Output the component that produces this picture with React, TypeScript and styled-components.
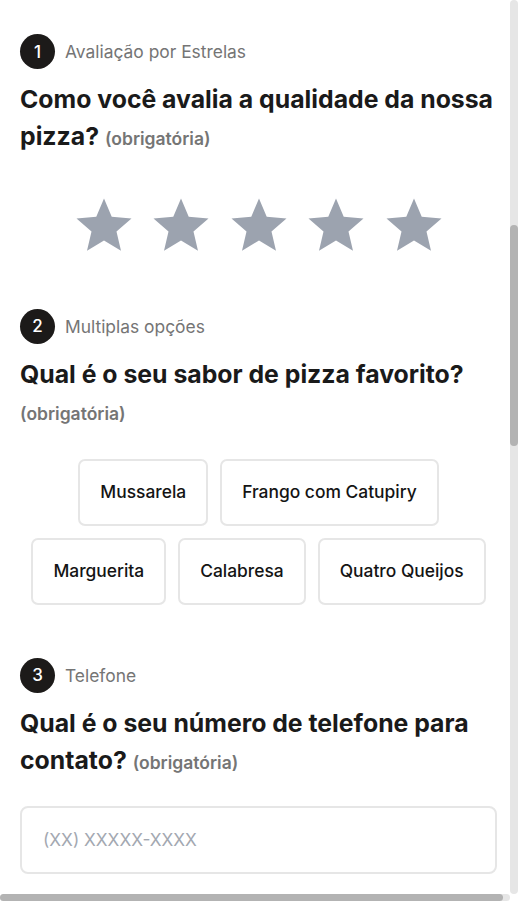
import React, { useLayoutEffect, useState } from "react";
import styled, { createGlobalStyle } from "styled-components";

const Global = createGlobalStyle`
  html, body { margin: 0; padding: 0; background: #fff; }
  body { font-family: Inter, "Noto Sans", Arial, sans-serif; overflow-x: hidden; }
  * { box-sizing: border-box; }
`;

const CONTENT_WIDTH = 517;
const BAR_V = 8;
const BAR_H = 7;

const Inner = styled.div`
  width: ${CONTENT_WIDTH}px;
  min-height: 3625px;
  padding: 0 20px;
`;

const Cover = styled.header`
  height: 913px;
  display: flex;
  flex-direction: column;
  align-items: center;
  justify-content: center;
  gap: 16px;
  text-align: center;
`;

const CoverTitle = styled.h1`
  margin: 0;
  font-size: 28px;
  font-weight: 700;
  color: #1a1a1a;
`;

const CoverText = styled.p`
  margin: 0;
  font-size: 17.4px;
  color: #737373;
`;

const Form = styled.form`
  display: flex;
  flex-direction: column;
  gap: 50px;
  padding-top: 34px;
  padding-bottom: 80px;
`;

const Section = styled.section`
  display: flex;
  flex-direction: column;
`;

const HeaderRow = styled.div`
  display: flex;
  align-items: center;
  gap: 10px;
`;

const Badge = styled.span`
  width: 35px;
  height: 35px;
  border-radius: 50%;
  background: #1c1a19;
  color: #fff;
  display: flex;
  align-items: center;
  justify-content: center;
  font-size: 17px;
  font-weight: 500;
`;

const Kind = styled.span`
  font-size: 17.4px;
  color: #757575;
`;

const Question = styled.h2`
  margin: 12px 0 0;
  font-size: 24.8px;
  font-weight: 700;
  line-height: 37px;
  color: #1a1a1a;
`;

const Required = styled.span`
  font-size: 17.5px;
  font-weight: 600;
  color: #757575;
`;

const StarRow = styled.div`
  margin-top: 35.5px;
  display: flex;
  justify-content: center;
  gap: 11.5px;
`;

const StarButton = styled.button`
  padding: 0;
  border: 0;
  background: none;
  width: 66px;
  height: 66px;
  display: block;
  cursor: pointer;
  svg { display: block; }
`;

const Options = styled.div`
  margin: 27px 0 3px;
  display: flex;
  flex-wrap: wrap;
  justify-content: center;
  column-gap: 12px;
  row-gap: 12px;
`;

const Option = styled.button`
  padding: 19.5px 20px;
  border: 2px solid #e6e6e6;
  border-radius: 7px;
  background: #fff;
  font-family: Inter, "Noto Sans", Arial, sans-serif;
  font-size: 17.4px;
  line-height: 24px;
  font-weight: 500;
  color: #141414;
  cursor: pointer;
`;

const TextInput = styled.input`
  margin-top: 25px;
  width: 100%;
  height: 68px;
  border: 2px solid #e6e6e6;
  border-radius: 8px;
  padding: 0 21px;
  font-family: Inter, "Noto Sans", Arial, sans-serif;
  font-size: 17.3px;
  color: #1a1a1a;
  outline: none;
  &::placeholder { color: #a3a8b1; }
`;

const TextArea = styled.textarea`
  margin-top: 25px;
  width: 100%;
  height: 140px;
  border: 2px solid #e6e6e6;
  border-radius: 8px;
  padding: 20px 21px;
  font-family: Inter, "Noto Sans", Arial, sans-serif;
  font-size: 17.3px;
  resize: none;
  outline: none;
  &::placeholder { color: #a3a8b1; }
`;

const Submit = styled.button`
  align-self: flex-start;
  padding: 16px 32px;
  border: 0;
  border-radius: 8px;
  background: #1c1a19;
  color: #fff;
  font-family: Inter, "Noto Sans", Arial, sans-serif;
  font-size: 17px;
  font-weight: 600;
`;

/* scroll indicators drawn over the page edge */
const VTrack = styled.div`
  position: fixed;
  top: 0;
  right: 0;
  width: ${BAR_V}px;
  height: calc(100vh - ${BAR_H}px);
  background: #e6e6e6;
  border-radius: 4px;
  z-index: 20;
`;

const HTrack = styled.div`
  position: fixed;
  left: 0;
  bottom: 0;
  width: calc(100vw - ${BAR_V}px);
  height: ${BAR_H}px;
  background: #e6e6e6;
  border-radius: 4px;
  z-index: 20;
`;

const Thumb = styled.div`
  position: absolute;
  background: #b3b3b3;
  border-radius: 4px;
`;

const Star = () => (
  <svg width="66" height="66" viewBox="0 0 24 24">
    <path
      fill="#9ca3af"
      d="M12 17.27L18.18 21l-1.64-7.03L22 9.24l-7.19-.61L12 2 9.19 8.63 2 9.24l5.46 4.73L5.82 21z"
    />
  </svg>
);

const flavors = [
  "Mussarela",
  "Frango com Catupiry",
  "Marguerita",
  "Calabresa",
  "Quatro Queijos",
];

type Bars = { top: number; height: number; width: number };

export default function App() {
  const [bars, setBars] = useState<Bars>({ top: 225, height: 220, width: 503 });

  useLayoutEffect(() => {
    const update = () => {
      const doc = document.documentElement;
      const vTrack = window.innerHeight - BAR_H;
      const hTrack = window.innerWidth - BAR_V;
      const total = doc.scrollHeight;
      setBars({
        top: (doc.scrollTop / total) * vTrack,
        height: (vTrack * vTrack) / total,
        width: (hTrack * hTrack) / CONTENT_WIDTH,
      });
    };
    window.scrollTo(0, 913);
    update();
    window.addEventListener("scroll", update);
    return () => window.removeEventListener("scroll", update);
  }, []);

  return (
    <>
      <Global />
      <Inner>
        <Cover>
          <CoverTitle>Pesquisa de satisfação</CoverTitle>
          <CoverText>Conte pra gente o que achou da nossa pizza.</CoverText>
        </Cover>
        <Form onSubmit={(e) => e.preventDefault()}>
          <Section>
            <HeaderRow>
              <Badge>1</Badge>
              <Kind>Avaliação por Estrelas</Kind>
            </HeaderRow>
            <Question>
              Como você avalia a qualidade da nossa pizza?{" "}
              <Required>(obrigatória)</Required>
            </Question>
            <StarRow>
              {[1, 2, 3, 4, 5].map((n) => (
                <StarButton key={n} type="button" aria-label={`${n} estrelas`}>
                  <Star />
                </StarButton>
              ))}
            </StarRow>
          </Section>

          <Section>
            <HeaderRow>
              <Badge>2</Badge>
              <Kind>Multiplas opções</Kind>
            </HeaderRow>
            <Question>
              Qual é o seu sabor de pizza favorito?{" "}
              <Required>(obrigatória)</Required>
            </Question>
            <Options>
              {flavors.map((f) => (
                <Option key={f} type="button">
                  {f}
                </Option>
              ))}
            </Options>
          </Section>

          <Section>
            <HeaderRow>
              <Badge>3</Badge>
              <Kind>Telefone</Kind>
            </HeaderRow>
            <Question>
              Qual é o seu número de telefone para contato?{" "}
              <Required>(obrigatória)</Required>
            </Question>
            <TextInput type="tel" placeholder="(XX) XXXXX-XXXX" />
          </Section>

          <Section>
            <HeaderRow>
              <Badge>4</Badge>
              <Kind>Texto longo</Kind>
            </HeaderRow>
            <Question>Deixe um comentário sobre o seu pedido</Question>
            <TextArea placeholder="Escreva aqui..." />
          </Section>

          <Submit type="submit">Enviar</Submit>
        </Form>
      </Inner>
      <VTrack>
        <Thumb style={{ left: 0, right: 0, top: bars.top, height: bars.height }} />
      </VTrack>
      <HTrack>
        <Thumb style={{ top: 0, bottom: 0, left: 0, width: bars.width }} />
      </HTrack>
    </>
  );
}
